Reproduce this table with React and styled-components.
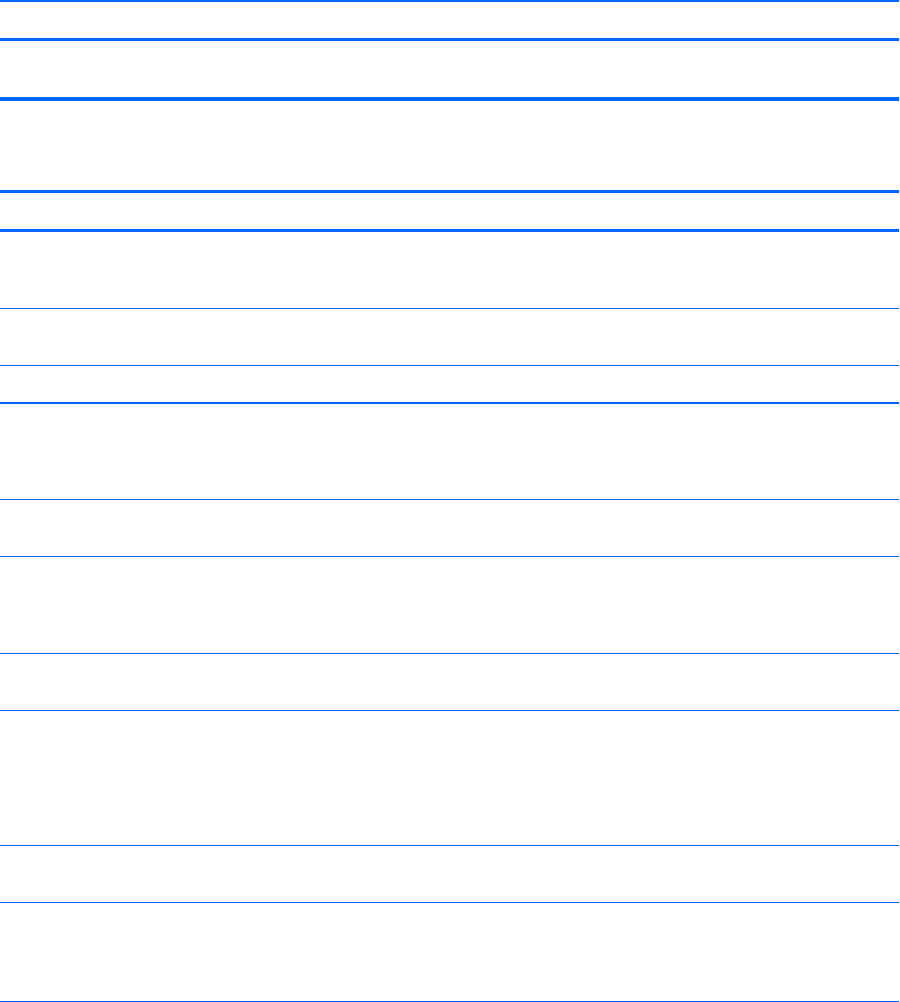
import React from 'react'
import styled, { createGlobalStyle } from 'styled-components'

const GlobalStyle = createGlobalStyle`
  html, body {
    margin: 0;
    padding: 0;
    background: #ffffff;
    font-family: 'Liberation Sans', Arial, sans-serif;
  }
`

// row heights (space under each rule) and the rule under it
const rows = [
  { h: 36, rule: 3 },
  { h: 56, rule: 4 },
  { h: 89, rule: 3 },
  { h: 36, rule: 3 },
  { h: 76, rule: 1 },
  { h: 56, rule: 1 },
  { h: 36, rule: 2 },
  { h: 95, rule: 1 },
  { h: 56, rule: 1 },
  { h: 96, rule: 1 },
  { h: 56, rule: 1 },
  { h: 134, rule: 1 },
  { h: 56, rule: 1 },
  { h: 98, rule: 1 },
]

const App = () => {
  return (
    <>
      <GlobalStyle />
      <Table>
        {rows.map((r, i) => (
          <Row key={i} $h={r.h} $rule={r.rule} />
        ))}
      </Table>
    </>
  )
}

export default App

const Table = styled.div`
  width: 899px;
  display: flex;
  flex-direction: column;
  border-top: 2px solid #0066ff;
`
const Row = styled.div`
  height: ${(p) => p.$h}px;
  border-bottom: ${(p) => p.$rule}px solid #0066ff;
  flex-shrink: 0;
`
